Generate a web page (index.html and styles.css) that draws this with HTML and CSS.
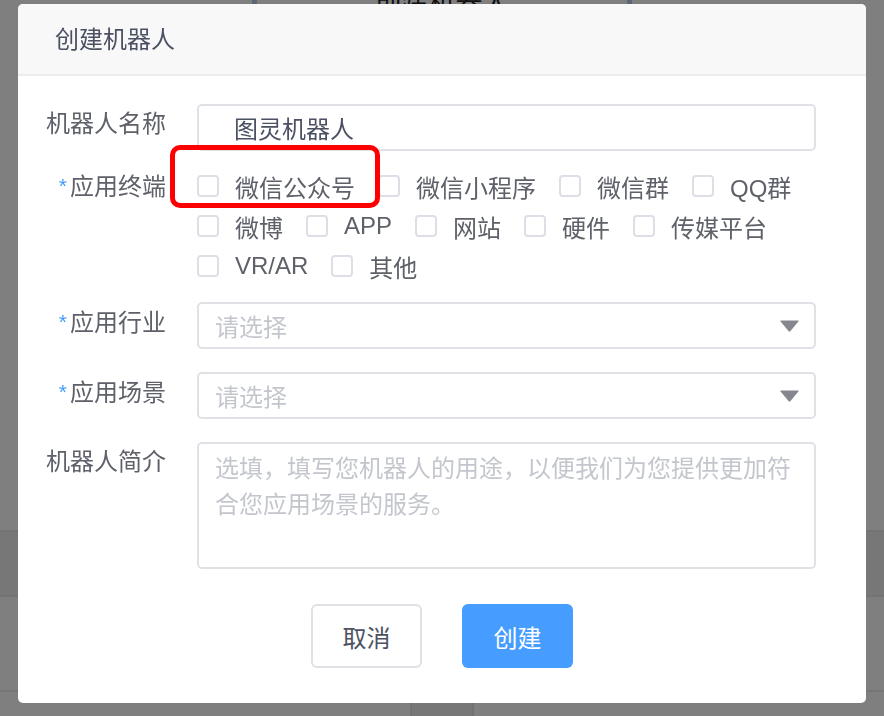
FILE: index.html
```html
<!DOCTYPE html>
<html lang="zh-CN">
<head>
<meta charset="utf-8">
<title>创建机器人</title>
<link rel="stylesheet" href="styles.css">
</head>
<body>
<div class="page">
  <div class="page-top">
    <div class="page-top-btn">创建机器人</div>
  </div>
  <div class="page-spacer"></div>
  <div class="page-band"></div>
  <div class="page-row"></div>
  <div class="page-foot">
    <div class="page-cell"></div>
  </div>
</div>

<div class="overlay">
  <div class="dialog">
    <div class="dialog-header">创建机器人</div>
    <div class="dialog-body">
      <div class="form-row form-row--name">
        <label class="form-label">机器人名称</label>
        <div class="form-control">
          <input class="input input--indent" type="text" value="图灵机器人">
        </div>
      </div>
      <div class="form-row form-row--terminals">
        <label class="form-label"><span class="req">*</span>应用终端</label>
        <div class="form-control checkbox-group">
          <div class="annotation"></div>
          <span class="cb"><span class="cb-box"></span>微信公众号</span>
          <span class="cb"><span class="cb-box"></span>微信小程序</span>
          <span class="cb"><span class="cb-box"></span>微信群</span>
          <span class="cb"><span class="cb-box"></span>QQ群</span>
          <span class="cb"><span class="cb-box"></span>微博</span>
          <span class="cb"><span class="cb-box"></span>APP</span>
          <span class="cb"><span class="cb-box"></span>网站</span>
          <span class="cb"><span class="cb-box"></span>硬件</span>
          <span class="cb"><span class="cb-box"></span>传媒平台</span>
          <span class="cb"><span class="cb-box"></span>VR/AR</span>
          <span class="cb"><span class="cb-box"></span>其他</span>
        </div>
      </div>
      <div class="form-row form-row--industry">
        <label class="form-label"><span class="req">*</span>应用行业</label>
        <div class="form-control">
          <div class="select">
            <span class="select-placeholder">请选择</span>
            <svg class="select-arrow" width="19" height="12" viewBox="0 0 19 12"><path d="M1 0.5 H18 Q19 0.5 18.4 1.5 L10.3 11.2 Q9.5 12 8.7 11.2 L0.6 1.5 Q0 0.5 1 0.5 Z" fill="#85878f"/></svg>
          </div>
        </div>
      </div>
      <div class="form-row form-row--scene">
        <label class="form-label"><span class="req">*</span>应用场景</label>
        <div class="form-control">
          <div class="select">
            <span class="select-placeholder">请选择</span>
            <svg class="select-arrow" width="19" height="12" viewBox="0 0 19 12"><path d="M1 0.5 H18 Q19 0.5 18.4 1.5 L10.3 11.2 Q9.5 12 8.7 11.2 L0.6 1.5 Q0 0.5 1 0.5 Z" fill="#85878f"/></svg>
          </div>
        </div>
      </div>
      <div class="form-row form-row--intro">
        <label class="form-label">机器人简介</label>
        <div class="form-control">
          <textarea class="textarea" placeholder="选填，填写您机器人的用途，以便我们为您提供更加符合您应用场景的服务。"></textarea>
        </div>
      </div>
      <div class="dialog-footer">
        <button class="btn btn--default" type="button">取消</button>
        <button class="btn btn--primary" type="button">创建</button>
      </div>
    </div>
  </div>
</div>
</body>
</html>
```

FILE: styles.css
```css
* { box-sizing: border-box; }

html, body {
  margin: 0;
  padding: 0;
  height: 100%;
  overflow: hidden;
}

body {
  font-family: "Liberation Sans", "Noto Sans CJK SC", sans-serif;
  background: #ffffff;
}

/* underlying page (dimmed by overlay) */
.page {
  height: 716px;
  display: flex;
  flex-direction: column;
  background: #ffffff;
}

.page-top {
  display: flex;
  justify-content: center;
}

.page-top-btn {
  width: 380px;
  height: 52px;
  margin-top: -40px;
  border-left: 5px solid #b8cdee;
  border-right: 5px solid #b8cdee;
  background: #ffffff;
  color: #222;
  font-size: 27px;
  line-height: 27px;
  padding-top: 30px;
  text-align: center;
}

.page-spacer { flex: 0 0 518px; }

.page-band {
  flex: 0 0 67px;
  background: #efefef;
  border-top: 2px solid #e6e6e6;
  border-bottom: 2px solid #e6e6e6;
}

.page-row {
  flex: 0 0 95px;
  border-bottom: 2px solid #ececec;
}

.page-foot {
  flex: 1;
  display: flex;
  justify-content: center;
}

.page-cell {
  width: 64px;
  margin-left: -1px;
  background: #eeeeee;
  border-left: 2px solid #e4e4e4;
  border-right: 2px solid #e4e4e4;
}

/* overlay + dialog */
.overlay {
  position: fixed;
  inset: 0;
  background: rgba(0, 0, 0, 0.5);
  display: flex;
  padding: 4px 18px 13px;
}

.dialog {
  width: 848px;
  height: 699px;
  background: #ffffff;
  border-radius: 5px;
  overflow: hidden;
  display: flex;
  flex-direction: column;
}

.dialog-header {
  height: 72px;
  flex: 0 0 72px;
  background: #f8f8f8;
  border-bottom: 2px solid #ececec;
  display: flex;
  align-items: center;
  padding-left: 37px;
  padding-bottom: 3px;
  font-size: 24px;
  color: #4b5163;
}

.dialog-body {
  padding: 28px 50px 0 0;
  display: flex;
  flex-direction: column;
}

.form-row {
  display: flex;
  align-items: flex-start;
}

.form-row--name { margin-bottom: 15px; }
.form-row--terminals { margin-bottom: 16px; }
.form-row--industry { margin-bottom: 23px; }
.form-row--scene { margin-bottom: 23px; }

.form-label {
  flex: 0 0 148px;
  margin-right: 31px;
  text-align: right;
  font-size: 24px;
  line-height: 40px;
  color: #5e6169;
  white-space: nowrap;
}

.req {
  color: #409eff;
  font-size: 21px;
  margin-right: 3px;
  vertical-align: 2px;
}

.form-control {
  flex: 1;
  min-width: 0;
}

.input {
  display: block;
  width: 100%;
  height: 47px;
  border: 2px solid #dfe1e7;
  border-radius: 5px;
  padding: 0 16px;
  font-family: inherit;
  font-size: 24px;
  color: #4b5163;
  background: #ffffff;
  outline: none;
}

.input--indent { padding-left: 35px; }

/* checkbox group */
.checkbox-group {
  position: relative;
  display: flex;
  flex-wrap: wrap;
  column-gap: 23px;
}

.cb {
  display: inline-flex;
  align-items: center;
  height: 40px;
  font-size: 24px;
  color: #5e6169;
  white-space: nowrap;
}

.cb-box {
  width: 22px;
  height: 22px;
  border: 2px solid #dcdfe6;
  border-radius: 4px;
  background: #ffffff;
  margin-right: 16px;
  flex: 0 0 22px;
}

.annotation {
  position: absolute;
  left: -27px;
  top: -21px;
  width: 210px;
  height: 63px;
  border: 5px solid #ff0000;
  border-radius: 10px;
  pointer-events: none;
}

/* select */
.select {
  height: 47px;
  border: 2px solid #dfe1e7;
  border-radius: 5px;
  display: flex;
  align-items: center;
  justify-content: space-between;
  padding: 0 15px 0 16px;
  background: #ffffff;
}

.select-placeholder {
  font-size: 24px;
  color: #c3c6cd;
}

.select-arrow { display: block; }

/* textarea */
.textarea {
  display: block;
  width: 100%;
  height: 127px;
  border: 2px solid #dfe1e7;
  border-radius: 5px;
  padding: 7px 16px;
  font-family: inherit;
  font-size: 24px;
  line-height: 36px;
  color: #4b5163;
  resize: none;
  overflow: hidden;
  outline: none;
}

.textarea::placeholder {
  color: #c3c6cd;
  opacity: 1;
}

/* footer */
.dialog-footer {
  margin-top: 35px;
  padding-left: 50px;
  display: flex;
  justify-content: center;
  gap: 40px;
}

.btn {
  width: 111px;
  height: 64px;
  border-radius: 6px;
  font-family: inherit;
  font-size: 24px;
  cursor: pointer;
  padding: 0;
}

.btn--default {
  background: #ffffff;
  border: 2px solid #dfe1e7;
  color: #4d5262;
}

.btn--primary {
  background: #479dff;
  border: none;
  color: #ffffff;
}
```
